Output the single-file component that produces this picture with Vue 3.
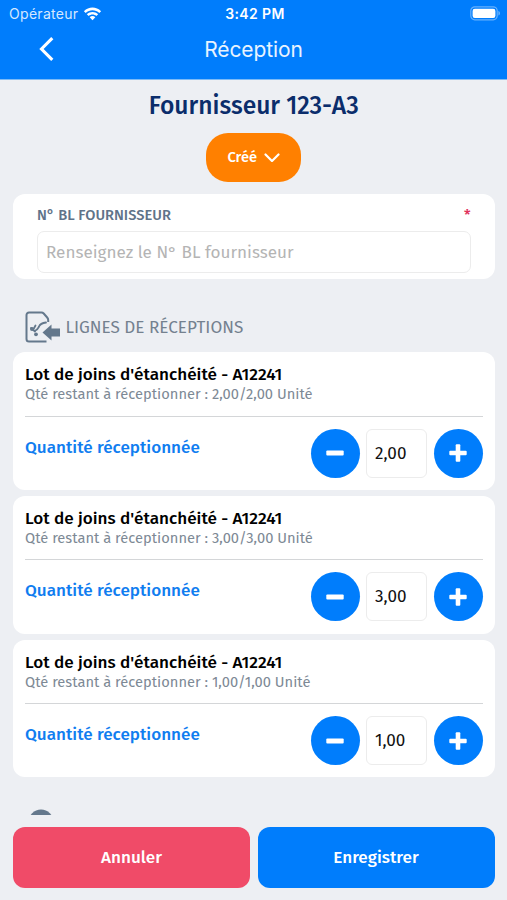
<template>
  <div class="screen">
    <header class="header">
      <div class="status-bar">
        <div class="carrier">
          <span class="carrier-name">Opérateur</span>
          <svg class="wifi" viewBox="0 0 18 14" width="19" height="14">
            <path d="M0.4 4.2C5.2-0.7 12.8-0.7 17.6 4.2L15.8 6.1C12 2.4 6 2.4 2.2 6.1Z" />
            <path d="M3.3 7.2C6.5 4.1 11.5 4.1 14.7 7.2L12.8 9.1C10.7 7.1 7.3 7.1 5.2 9.1Z" />
            <path d="M6.2 10.2C7.8 8.7 10.2 8.7 11.8 10.2L9 13.2Z" />
          </svg>
        </div>
        <span class="clock">3:42 PM</span>
        <div class="battery-wrap">
          <svg viewBox="0 0 31 15" width="31" height="15">
            <rect x="0.8" y="0.8" width="26.4" height="13" rx="4" fill="none" stroke="#fff" stroke-opacity="0.4" stroke-width="1.2" />
            <rect x="2.6" y="2.7" width="22.8" height="9.2" rx="2.2" fill="#fff" />
            <path d="M28.5 5v4.6c1.8-.7 1.8-3.9 0-4.6z" fill="#fff" fill-opacity="0.5" />
          </svg>
        </div>
      </div>
      <div class="nav-bar">
        <button class="back" aria-label="Retour">
          <svg viewBox="0 0 16 26" width="16" height="26">
            <path d="M13.3 2.2L2.5 13l10.8 10.8" fill="none" stroke="#fff" stroke-width="3.1" />
          </svg>
        </button>
        <span class="nav-title">Réception</span>
      </div>
    </header>

    <main class="content">
      <h1 class="supplier">Fournisseur 123-A3</h1>
      <button class="state">
        <span>Créé</span>
        <svg viewBox="0 0 16 10" width="16" height="10">
          <path d="M1.5 2.5L8 9l6.5-6.5" fill="none" stroke="#fff" stroke-width="2.2" stroke-linecap="round" />
        </svg>
      </button>

      <section class="card form-card">
        <div class="field-head">
          <label class="field-label" for="bl">N° BL FOURNISSEUR</label>
          <span class="required">*</span>
        </div>
        <input id="bl" v-model="blNumber" class="field-input" placeholder="Renseignez le N° BL fournisseur" />
      </section>

      <div class="section-title">
        <svg viewBox="0 0 36 32" width="36" height="32">
          <g fill="none" stroke="#64788c" stroke-width="2">
            <path d="M21.5 30.5H4A2.5 2.5 0 0 1 1.5 28V4A2.5 2.5 0 0 1 4 1.5h12.5c1 0 1.5.3 2.2 1l3.5 4c.8.9 1 1.5 1 2.5v2" stroke-linejoin="round" />
            <path d="M10.5 19.5c2.5-1 2.5-2 3.5-4 1-2.5 2.500-3.500 7-4" stroke-width="1.8" stroke-linecap="round" />
            <path d="M6 17l4 3.500M10.500 14.500l-2.500 4.500" stroke-width="1.8" stroke-linecap="round" />
          </g>
          <circle cx="11" cy="23.3" r="1.9" fill="#64788c" />
          <circle cx="7" cy="18" r="2" fill="#64788c" />
          <path d="M17.500 21.500l9-8v4H35v8h-8.500v4z" fill="#64788c" />
        </svg>
        <h2>LIGNES DE RÉCEPTIONS</h2>
      </div>

      <section v-for="line in lines" :key="line.id" class="card line-card">
        <h3 class="line-name">{{ line.name }}</h3>
        <p class="line-remaining">
          Qté restant à réceptionner : {{ format(line.remaining) }}/{{ format(line.total) }} Unité
        </p>
        <div class="line-quantity">
          <span class="quantity-label">Quantité réceptionnée</span>
          <div class="stepper">
            <button class="round" aria-label="Diminuer" @click="step(line, -1)">
              <svg viewBox="0 0 18 18" width="18" height="18">
                <rect x="0.3" y="6.5" width="17.4" height="5" rx="1" />
              </svg>
            </button>
            <input class="quantity-input" :value="format(line.quantity)" @change="setQuantity(line, $event)" />
            <button class="round" aria-label="Augmenter" @click="step(line, 1)">
              <svg viewBox="0 0 18 18" width="18" height="18">
                <rect x="0.3" y="6.7" width="17.4" height="4.6" rx="1" />
                <rect x="6.7" y="0.3" width="4.6" height="17.4" rx="1" />
              </svg>
            </button>
          </div>
        </div>
      </section>

      <div class="next-section">
        <svg viewBox="0 0 26 26" width="26" height="26">
          <circle cx="13" cy="13" r="12.5" fill="#64788c" />
        </svg>
      </div>
    </main>

    <footer class="actions">
      <button class="action cancel">Annuler</button>
      <button class="action save">Enregistrer</button>
    </footer>
  </div>
</template>

<script setup>
import { ref } from "vue";

const blNumber = ref("");

const lines = ref([
  { id: 1, name: "Lot de joins d'étanchéité - A12241", remaining: 2, total: 2, quantity: 2 },
  { id: 2, name: "Lot de joins d'étanchéité - A12241", remaining: 3, total: 3, quantity: 3 },
  { id: 3, name: "Lot de joins d'étanchéité - A12241", remaining: 1, total: 1, quantity: 1 },
]);

const format = (value) => value.toFixed(2).replace(".", ",");

const step = (line, delta) => {
  line.quantity = Math.max(0, line.quantity + delta);
};

const setQuantity = (line, event) => {
  const value = parseFloat(event.target.value.replace(",", "."));
  if (!Number.isNaN(value)) {
    line.quantity = value;
  }
  event.target.value = format(line.quantity);
};
</script>

<style>
body {
  margin: 0;
  background: #edeff3;
}
</style>

<style scoped>
.screen {
  display: flex;
  flex-direction: column;
  height: 900px;
  overflow: hidden;
  background: #edeff3;
  font-family: "Fira Sans", "Noto Sans", sans-serif;
}

.screen * {
  box-sizing: border-box;
}

button {
  padding: 0;
  border: none;
  font-family: inherit;
  cursor: pointer;
}

input {
  font-family: inherit;
  outline: none;
}

h1,
h2,
h3,
p {
  margin: 0;
  white-space: nowrap;
}

/* Header */
.header {
  flex: none;
  height: 80px;
  background: #007dfc;
  border-bottom: 1px solid #7dbbf7;
  color: #fff;
  font-family: Inter, sans-serif;
}

.status-bar {
  display: grid;
  grid-template-columns: 1fr auto 1fr;
  align-items: center;
  height: 27px;
  padding: 0 6px 0 9px;
}

.carrier {
  display: flex;
  align-items: center;
  gap: 5px;
}

.carrier-name {
  font-size: 14px;
  letter-spacing: 0.3px;
  color: #d5e8ff;
}

.wifi {
  fill: #fff;
}

.clock {
  font-size: 14px;
  font-weight: 600;
  letter-spacing: 0.4px;
}

.battery-wrap {
  display: flex;
  justify-content: flex-end;
}

.nav-bar {
  display: grid;
  grid-template-columns: 80px 1fr 80px;
  align-items: center;
  height: 44px;
}

.back {
  display: flex;
  padding-left: 39px;
  background: none;
}

.nav-title {
  font-size: 21px;
  letter-spacing: -0.1px;
  text-align: center;
  color: #e8f3ff;
}

/* Content */
.content {
  flex: none;
  display: flex;
  flex-direction: column;
  height: 735px;
  padding: 10px 12.5px 0 13px;
  overflow: hidden;
}

.supplier {
  height: 32px;
  line-height: 32px;
  font-size: 24.6px;
  font-weight: 500;
  text-align: center;
  color: #0b2d6b;
}

.state {
  display: flex;
  flex: none;
  align-items: center;
  justify-content: center;
  gap: 7px;
  align-self: center;
  width: 95px;
  height: 49px;
  margin-top: 11px;
  padding-bottom: 2px;
  border-radius: 22px;
  background: #ff8000;
  color: #fff;
  font-size: 14.7px;
  font-weight: 500;
}

.card {
  flex: none;
  border-radius: 12px;
  background: #fff;
}

.form-card {
  height: 85px;
  margin-top: 12px;
  padding: 12px 24px 0;
}

.field-head {
  display: flex;
  justify-content: space-between;
  height: 25px;
  line-height: 19px;
}

.field-label {
  font-size: 14.7px;
  font-weight: 500;
  color: #5f7389;
}

.required {
  font-size: 14.7px;
  font-weight: 500;
  color: #e0325c;
}

.field-input {
  display: block;
  width: 100%;
  height: 42px;
  padding: 0 8px;
  border: 1px solid #ececec;
  border-radius: 7px;
  font-size: 17.1px;
}

.field-input::placeholder {
  color: #b4b4b4;
  opacity: 1;
}

.section-title {
  display: flex;
  flex: none;
  align-items: center;
  gap: 4.5px;
  height: 32px;
  margin-top: 32px;
  padding-left: 12px;
}

.section-title h2 {
  font-size: 17.1px;
  font-weight: 400;
  color: #74818f;
}

.line-card {
  height: 137.8px;
  margin-bottom: 6px;
  padding: 13px 12px 0;
}

.section-title + .line-card {
  margin-top: 9px;
}

.line-name {
  height: 20px;
  line-height: 20px;
  font-size: 17.15px;
  font-weight: 500;
  color: #000;
}

.line-remaining {
  height: 31.5px;
  line-height: 19px;
  border-bottom: 1px solid #d4d6d8;
  font-size: 14.7px;
  color: #7d8995;
}

.line-quantity {
  display: flex;
  justify-content: space-between;
  padding-top: 12px;
}

.quantity-label {
  margin-top: 7px;
  line-height: 24px;
  font-size: 17.1px;
  font-weight: 500;
  white-space: nowrap;
  color: #107df0;
}

.stepper {
  display: flex;
  align-items: center;
  gap: 6.5px;
}

.round {
  display: flex;
  align-items: center;
  justify-content: center;
  width: 49px;
  height: 49px;
  border-radius: 50%;
  background: #007dfc;
}

.round svg {
  fill: #fff;
}

.quantity-input {
  width: 61px;
  height: 49px;
  padding: 0 8px;
  border: 1px solid #ececec;
  border-radius: 6px;
  font-size: 17.1px;
  color: #111;
}

.next-section {
  flex: none;
  margin-top: 26px;
  padding-left: 14.5px;
}

/* Bottom actions */
.actions {
  display: flex;
  gap: 7.5px;
  padding: 12px 12.5px 12px 13px;
}

.action {
  flex: 1;
  height: 61px;
  border-radius: 12px;
  color: #fff;
  font-size: 17.1px;
  font-weight: 500;
}

.cancel {
  background: #f04b68;
}

.save {
  background: #007dfc;
}
</style>
